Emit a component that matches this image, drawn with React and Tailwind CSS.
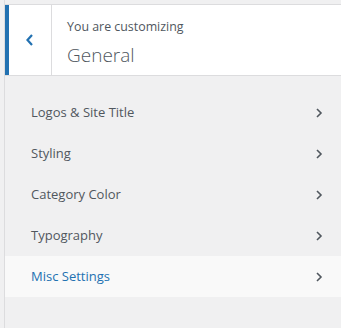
import React from "react";

const items = [
  { label: "Logos & Site Title" },
  { label: "Styling" },
  { label: "Category Color" },
  { label: "Typography" },
  { label: "Misc Settings", active: true },
];

const Chevron = ({ className }) => (
  <svg className={className} width="8" height="12" viewBox="0 0 8 12" fill="none">
    <polyline points="2,2 6,6 2,10" stroke="currentColor" strokeWidth="1.6" />
  </svg>
);

export default function App() {
  return (
    <div
      className="w-[341px] h-[328px] bg-[#f0f0f1] flex overflow-hidden"
      style={{ fontFamily: '"Open Sans", "Noto Sans", sans-serif' }}
    >
      <div className="w-[4px] shrink-0" />
      <div className="flex-1 flex flex-col border-l border-[#dcdcde]">
        <div className="mt-[4px] h-[72px] bg-white border-t border-b border-[#dcdcde] flex">
          <button className="w-[47px] shrink-0 border-l-4 border-[#2271b1] border-r border-r-[#dcdcde] flex items-center justify-center text-[#2271b1]">
            <svg width="10" height="14" viewBox="0 0 10 14" fill="none">
              <polyline points="7,2 2.5,7 7,12" stroke="currentColor" strokeWidth="2.2" />
            </svg>
          </button>
          <div className="pl-[15px] pt-[12px] text-[#50575e]">
            <div className="text-[12.4px] leading-[20px]">You are customizing</div>
            <div className="text-[19px] leading-[28px] font-light mt-[4px]">General</div>
          </div>
        </div>
        <div className="mt-[16px] flex flex-col">
          {items.map((it) => (
            <div
              key={it.label}
              className={
                "h-[41px] flex items-center justify-between pl-[26px] pr-[18px] " +
                (it.active ? "bg-[#f9f9f9] text-[#2271b1]" : "text-[#50575e]")
              }
            >
              <span className="text-[13px]">{it.label}</span>
              <Chevron className="text-[#50575e]" />
            </div>
          ))}
        </div>
      </div>
    </div>
  );
}
